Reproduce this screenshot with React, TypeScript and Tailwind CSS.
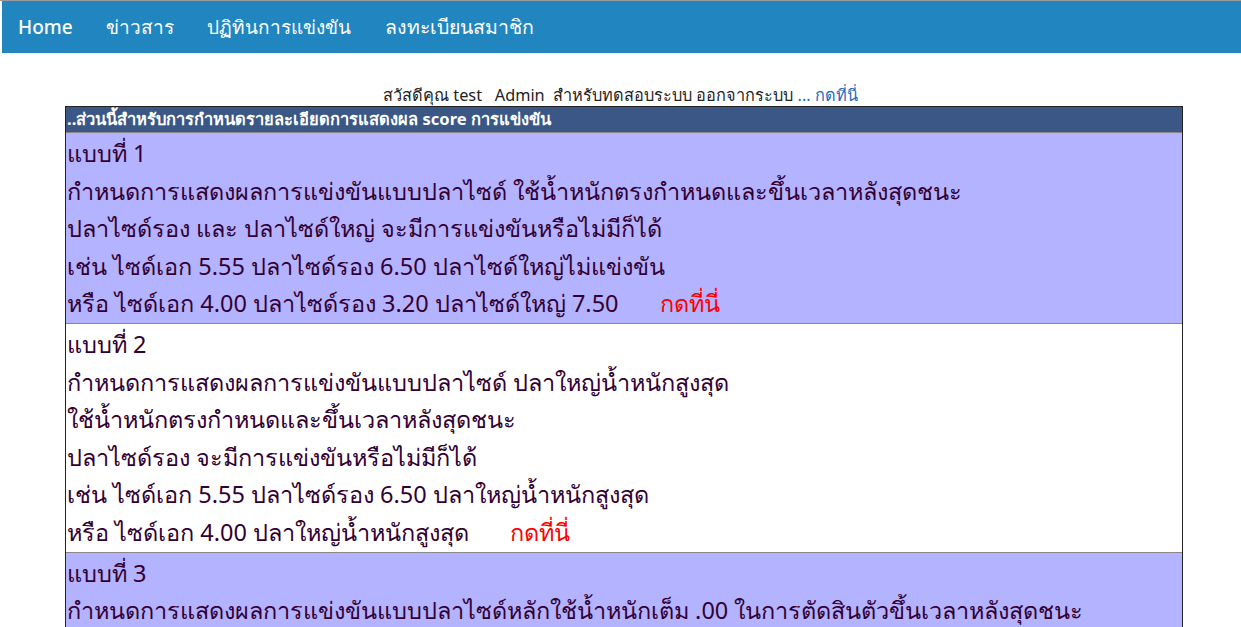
import React from "react";

const rows = [
  {
    bg: "bg-[#b3b3ff]",
    lines: [
      "แบบที่ 1",
      "กำหนดการแสดงผลการแข่งขันแบบปลาไซด์ ใช้น้ำหนักตรงกำหนดและขึ้นเวลาหลังสุดชนะ",
      "ปลาไซด์รอง และ ปลาไซด์ใหญ่ จะมีการแข่งขันหรือไม่มีก็ได้",
      "เช่น ไซด์เอก 5.55 ปลาไซด์รอง 6.50 ปลาไซด์ใหญ่ไม่แข่งขัน",
    ],
    last: "หรือ ไซด์เอก 4.00 ปลาไซด์รอง 3.20 ปลาไซด์ใหญ่ 7.50",
  },
  {
    bg: "bg-white",
    lines: [
      "แบบที่ 2",
      "กำหนดการแสดงผลการแข่งขันแบบปลาไซด์ ปลาใหญ่น้ำหนักสูงสุด",
      "ใช้น้ำหนักตรงกำหนดและขึ้นเวลาหลังสุดชนะ",
      "ปลาไซด์รอง จะมีการแข่งขันหรือไม่มีก็ได้",
      "เช่น ไซด์เอก 5.55 ปลาไซด์รอง 6.50 ปลาใหญ่น้ำหนักสูงสุด",
    ],
    last: "หรือ ไซด์เอก 4.00 ปลาใหญ่น้ำหนักสูงสุด",
  },
  {
    bg: "bg-[#b3b3ff]",
    lines: [
      "แบบที่ 3",
      "กำหนดการแสดงผลการแข่งขันแบบปลาไซด์หลักใช้น้ำหนักเต็ม .00 ในการตัดสินตัวขึ้นเวลาหลังสุดชนะ",
      "ปลาไซด์รอง จะมีการแข่งขันหรือไม่มีก็ได้",
    ],
    last: "",
  },
];

export default function App() {
  return (
    <div
      className="min-h-screen bg-white border-t border-[#9a9a9a] overflow-hidden"
      style={{ fontFamily: '"Noto Sans", "DejaVu Sans", sans-serif' }}
    >
      <nav className="ml-[2px] h-[52px] bg-[#2186c0] flex items-center text-white text-[19px] font-medium">
        <span className="ml-[16px]">Home</span>
        <span className="ml-[33px]">ข่าวสาร</span>
        <span className="ml-[33px]">ปฏิทินการแข่งขัน</span>
        <span className="ml-[34px] text-[19.5px]">ลงทะเบียนสมาชิก</span>
      </nav>
      <div className="mt-[32px] text-center text-[16.3px] leading-[21px] text-[#222]">
        สวัสดีคุณ test&nbsp;&nbsp; Admin&nbsp; สำหรับทดสอบระบบ ออกจากระบบ{" "}
        <span className="text-[#1a6cc0]">... กดที่นี่</span>
      </div>
      <div className="ml-[65px] w-[1118px] border border-[#222]">
        <div className="bg-[#3b5785] h-[26px] flex items-center px-[1px] text-white text-[16.5px] font-bold border-b border-[#888]">
          ..ส่วนนี้สำหรับการกำหนดรายละเอียดการแสดงผล score การแข่งขัน
        </div>
        {rows.map((r, i) => (
          <div
            key={i}
            className={`${r.bg} px-[1px] pt-[2px] text-[23.5px] leading-[37.6px] text-[#330033] border-b border-[#888]`}
          >
            {r.lines.map((l, j) => (
              <div key={j}>{l}</div>
            ))}
            {r.last && (
              <div>
                {r.last}
                <span className="ml-[41px] text-[#ff0000]">กดที่นี่</span>
              </div>
            )}
          </div>
        ))}
      </div>
    </div>
  );
}
